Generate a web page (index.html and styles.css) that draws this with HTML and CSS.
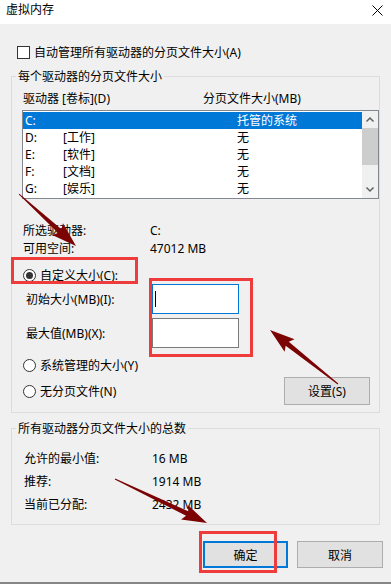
FILE: index.html
```html
<!DOCTYPE html>
<html lang="zh-CN">

<head>
	<meta charset="UTF-8">
	<meta name="viewport" content="width=device-width, initial-scale=1.0">
	<title>虚拟内存</title>
	<link rel="stylesheet" href="styles.css">
</head>

<body>
	<div class="window">
		<div class="titlebar">
			<span class="title">虚拟内存</span>
			<svg class="close" width="11" height="11" viewBox="0 0 11 11">
				<path d="M0.5 0.5L10.5 10.5M10.5 0.5L0.5 10.5" stroke="#000" stroke-width="1" fill="none" />
			</svg>
		</div>

		<div class="dialog">
			<label class="check"><span class="box"></span>自动管理所有驱动器的分页文件大小(A)</label>

			<fieldset class="group">
				<legend>每个驱动器的分页文件大小</legend>
				<div class="inner">
					<div class="list-head">
						<span>驱动器 [卷标](D)</span>
						<span>分页文件大小(MB)</span>
					</div>

					<div class="listbox">
						<ul class="rows">
							<li class="selected"><span>C:</span><span></span><span>托管的系统</span></li>
							<li><span>D:</span><span>[工作]</span><span>无</span></li>
							<li><span>E:</span><span>[软件]</span><span>无</span></li>
							<li><span>F:</span><span>[文档]</span><span>无</span></li>
							<li><span>G:</span><span>[娱乐]</span><span>无</span></li>
						</ul>
						<div class="scrollbar">
							<svg class="sb-btn" width="16" height="17" viewBox="0 0 16 17">
								<path d="M4.5 10.5L8 7L11.5 10.5" stroke="#606060" stroke-width="1.5" fill="none" />
							</svg>
							<div class="thumb"></div>
							<div class="track"></div>
							<svg class="sb-btn" width="16" height="17" viewBox="0 0 16 17">
								<path d="M4.5 6.5L8 10L11.5 6.5" stroke="#606060" stroke-width="1.5" fill="none" />
							</svg>
						</div>
					</div>

					<dl class="info">
						<dt>所选驱动器:</dt>
						<dd>C:</dd>
						<dt>可用空间:</dt>
						<dd>47012 MB</dd>
					</dl>

					<label class="radio checked custom"><span class="dot"></span>自定义大小(C):</label>

					<div class="sizes">
						<span>初始大小(MB)(I):</span>
						<div class="textbox focused"><span class="caret"></span></div>
						<span>最大值(MB)(X):</span>
						<div class="textbox"></div>
					</div>

					<label class="radio system"><span class="dot"></span>系统管理的大小(Y)</label>

					<div class="last-row">
						<label class="radio"><span class="dot"></span>无分页文件(N)</label>
						<button class="btn set">设置(S)</button>
					</div>
				</div>
			</fieldset>

			<fieldset class="group totals">
				<legend>所有驱动器分页文件大小的总数</legend>
				<dl class="inner summary">
					<dt>允许的最小值:</dt>
					<dd>16 MB</dd>
					<dt>推荐:</dt>
					<dd>1914 MB</dd>
					<dt>当前已分配:</dt>
					<dd>2432 MB</dd>
				</dl>
			</fieldset>

			<div class="actions">
				<button class="btn default">确定</button>
				<button class="btn">取消</button>
			</div>
		</div>

		<!-- annotations drawn over the dialog -->
		<svg class="annot" width="391" height="584" viewBox="0 0 391 584">
			<g fill="none" stroke="#ee3b3b" stroke-width="3">
				<rect x="12.5" y="258.5" width="124" height="24" />
				<rect x="150.5" y="279.5" width="101" height="76" />
				<rect x="200.5" y="532.5" width="75" height="39" />
			</g>
			<g fill="#7b0303">
				<polygon points="18.66,194.37 58.08,233.02 52.16,235.05 76,246 62.94,223.25 61.45,229.32 19.34,193.63" />
				<polygon points="338.31,383.61 288.79,341.72 294.56,339.29 270,330 284.60,351.81 285.68,345.64 337.69,384.39" />
				<polygon points="114.78,479.45 186.08,515.77 181.0,519.44 207,523 187.9,505.0 188.24,511.26 115.22,478.55" />
			</g>
		</svg>
	</div>
</body>

</html>
```

FILE: styles.css
```css
* {
	box-sizing: border-box;
}

body {
	margin: 0;
	font-family: "Noto Sans", "Noto Sans CJK SC", sans-serif;
	font-size: 12px;
	color: #000;
	background-color: #f0f0f0;
}

.window {
	position: relative;
	height: 584px;
	overflow: hidden;
	border-bottom: 2px solid #868686;
}

.titlebar {
	height: 24px;
	background: #fff;
	display: flex;
	justify-content: space-between;
	align-items: flex-start;
	padding: 1px 8px 0 6px;
}

.title {
	line-height: 18px;
}

.close {
	margin-top: 4px;
}

.dialog {
	padding-top: 20px;
}

.check {
	display: flex;
	align-items: center;
	line-height: 17px;
	margin: 0 0 7px 17px;
}

.check .box {
	width: 13px;
	height: 13px;
	border: 1px solid #333;
	background: #fff;
	margin-right: 4px;
}

.group {
	margin: 0 11px;
	padding: 0 0 7px 4px;
	border: 1px solid #dcdcdc;
	min-width: 0;
}

.group legend {
	padding: 0 2px;
	line-height: 17px;
}

.inner {
	padding-left: 6px;
}

.list-head {
	display: grid;
	grid-template-columns: 180px 1fr;
	margin-top: 5px;
	padding-left: 1px;
	line-height: 17px;
}

.listbox {
	display: flex;
	margin-top: 3px;
	height: 89px;
	border: 1px solid #828790;
	background: #fff;
}

.rows {
	list-style: none;
	margin: 0;
	padding: 1px 0 0;
	flex: 1;
}

.rows li {
	display: grid;
	grid-template-columns: 38px 174px 1fr;
	height: 17px;
	line-height: 17px;
	padding-left: 2px;
}

.rows li.selected {
	background: #0078d7;
	color: #fff;
}

.scrollbar {
	width: 16px;
	background: #f0f0f0;
	display: flex;
	flex-direction: column;
}

.sb-btn {
	display: block;
	flex: none;
}

.thumb {
	height: 37px;
	background: #cdcdcd;
}

.track {
	flex: 1;
}

.info {
	display: grid;
	grid-template-columns: 127px 1fr;
	margin: 23px 0 0;
	padding-left: 1px;
	line-height: 18px;
}

dt,
dd {
	margin: 0;
}

.radio {
	display: flex;
	align-items: center;
	line-height: 17px;
	padding-left: 1px;
}

.radio .dot {
	width: 13px;
	height: 13px;
	border: 1px solid #333;
	border-radius: 50%;
	background: #fff;
	margin-right: 4px;
	display: grid;
	place-items: center;
}

.radio.checked .dot::after {
	content: "";
	width: 7px;
	height: 7px;
	border-radius: 50%;
	background: #333;
}

.radio.custom {
	margin-top: 9px;
}

.sizes {
	display: grid;
	grid-template-columns: 126px 87px;
	row-gap: 4px;
	align-items: center;
	padding-left: 4px;
}

.textbox {
	height: 30px;
	border: 1px solid #7a7a7a;
	background: #fff;
	display: flex;
	align-items: center;
	padding-left: 2px;
}

.textbox.focused {
	border-color: #0078d7;
}

.caret {
	width: 1px;
	height: 16px;
	background: #000;
}

.radio.system {
	margin-top: 9px;
}

.last-row {
	display: flex;
	justify-content: space-between;
	align-items: center;
	margin-top: 3px;
	padding-right: 9px;
}

.btn {
	font: inherit;
	color: #000;
	background: #e1e1e1;
	border: 1px solid #adadad;
	padding: 0;
}

.btn.set {
	width: 86px;
	height: 28px;
}

.totals {
	margin-top: 7px;
	padding-bottom: 8px;
}

.summary {
	display: grid;
	grid-template-columns: 128px 1fr;
	margin: 10px 0 0;
	padding-left: 8px;
	line-height: 23px;
}

.actions {
	display: flex;
	justify-content: flex-end;
	gap: 9px;
	margin-top: 16px;
	padding-right: 8px;
}

.actions .btn {
	width: 86px;
	height: 27px;
}

.actions .btn.default {
	width: 85px;
	border: 2px solid #0078d7;
}

.annot {
	position: absolute;
	top: 0;
	left: 0;
	pointer-events: none;
}
```
